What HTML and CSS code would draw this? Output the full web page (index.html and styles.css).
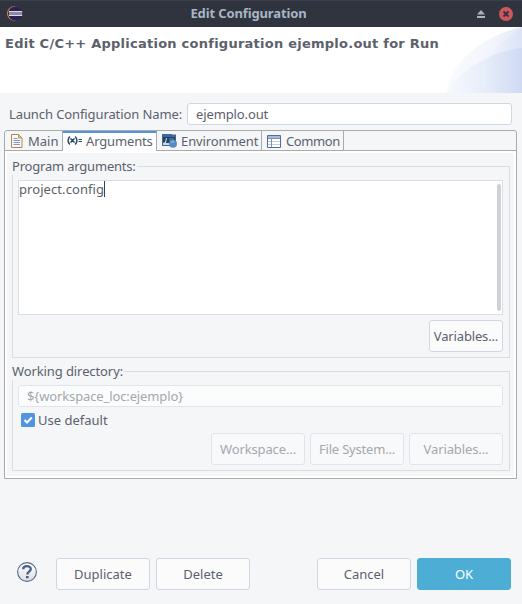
FILE: index.html
```
<!DOCTYPE html>
<html lang="en">
<head>
<meta charset="utf-8">
<title>Edit Configuration</title>
<link rel="stylesheet" href="styles.css">
</head>
<body>
<main class="dialog">
  <header class="titlebar">
    <svg class="app-icon" width="16" height="16" viewBox="0 0 16 16"><circle cx="7.2" cy="7.5" r="7.2" fill="#d88a35"/><circle cx="8.2" cy="7.5" r="7.1" fill="#2b2155"/><path d="M2 5.500h13.200M2 9.500h13.200" stroke="#dcd9e6"/><path d="M2 7.500h13.200" stroke="#8d88a8" stroke-width="3"/></svg>
    <h1 class="window-title">Edit Configuration</h1>
    <svg class="shade-icon" width="8" height="8" viewBox="0 0 8 8"><path d="M4 0 8 4.500H0zM0 6h8v2H0z" fill="#aeb2bd"/></svg>
    <svg class="close-icon" width="14" height="14" viewBox="0 0 14 14"><circle cx="7" cy="7" r="7" fill="#cc575d"/><path d="m4.500 4.500 5 5m0-5-5 5" stroke="#2f343f" stroke-width="1.800"/></svg>
  </header>
  <section class="banner">
    <h2 class="heading">Edit C/C++ Application configuration ejemplo.out for Run</h2>
    <svg class="swoosh" width="76" height="66" viewBox="0 0 76 66">
      <defs>
        <linearGradient id="pale"><stop offset="0" stop-color="#fafbfe"/><stop offset=".6" stop-color="#f2f5fc"/><stop offset="1" stop-color="#e2e8f7"/></linearGradient>
        <linearGradient id="mid"><stop offset="0" stop-color="#f4f7fd"/><stop offset="1" stop-color="#dbe3f5"/></linearGradient>
        <linearGradient id="deep"><stop offset="0" stop-color="#f7f9fe"/><stop offset=".5" stop-color="#e7edf9"/><stop offset="1" stop-color="#cfdaf3"/></linearGradient>
      </defs>
      <path d="M1 66C3 39 32 10 76 0v66z" fill="url(#pale)"/>
      <path d="M38 36C49 21 60 9 76 2v64H38z" fill="url(#mid)"/>
      <path d="M1 66C4 57 14 47 24 41 40 30 57 23 76 21v45z" fill="url(#deep)"/>
    </svg>
  </section>

  <div class="name-row">
    <label class="name-label">Launch Configuration Name:</label>
    <div class="field name-field"><span class="tight">ejemplo.out</span></div>
  </div>

  <section class="folder">
    <nav class="tabs">
      <div class="tab tab-main">
        <svg width="12" height="14" viewBox="0 0 12 14"><path d="M.5.5h7l3.500 3.500v9.500H.5z" fill="#f4f7fd" stroke="#b08d3c"/><path d="M7.500.5V4H11z" fill="#e8c671" stroke="#b08d3c" stroke-width=".8"/><path d="M2.500 4.500h4M2.500 6.500h6.500M2.500 8.500h6.500M2.500 10.500h6.500" stroke="#8297c5"/></svg>
        <span>Main</span>
      </div>
      <div class="tab tab-args">
        <svg width="16" height="10" viewBox="0 0 16 10"><path d="M2.800.5Q-.6 4.500 2.800 8.500M8.200.5Q11.600 4.500 8.200 8.500M3.500 2.500l4 4m0-4-4 4" fill="none" stroke="#28496f" stroke-width="1.500"/><path d="M11.500 3.500H15M11.500 5.500H15" stroke="#28496f"/></svg>
        <span>Arguments</span>
      </div>
      <div class="tab tab-env">
        <svg width="16" height="14" viewBox="0 0 16 14"><path d="M0 0h14v12H0z" fill="#406a9e"/><path d="M0 0h14v2H0z" fill="#356ba8"/><path d="M10 0h4v1h-4z" fill="#d0ad60"/><path d="M1 3h12v8H1z" fill="#234065"/><path d="M1 11V9l2-1 1-4h1L4 9h5v2z" fill="#c8d7e7"/><path d="M7 4h5v3H7z" fill="#456b98"/><circle cx="11" cy="9.800" r="4" fill="#568cc3"/><path d="M8 8q3-3 5 0l-2 1z" fill="#82b0da"/></svg>
        <span>Environment</span>
      </div>
      <div class="tab tab-common">
        <svg width="14" height="13" viewBox="0 0 14 13"><path d="M.5.5h13v12H.5z" fill="#fff" stroke="#566b99"/><path d="M1 1h12v2H1z" fill="#a9b9d9"/><path d="M1 3.500h12M4.500 3v9" stroke="#7f90b6"/><path d="M5 6.500h8M5 9.500h8M1 6.500h3M1 9.500h3" stroke="#c2ccdf"/></svg>
        <span>Common</span>
      </div>
    </nav>
    <div class="page">
      <fieldset class="group args-group">
        <legend class="legend-args">Program arguments:</legend>
        <div class="textarea"><span class="typed">project.config</span><i class="caret"></i><i class="scroll"></i></div>
        <div class="button variables">Variables...</div>
      </fieldset>
      <fieldset class="group dir-group">
        <legend class="legend-dir">Working directory:</legend>
        <div class="field dir-field"><span class="tight">${workspace_loc:ejemplo}</span></div>
        <div class="check-row">
          <svg width="14" height="14" viewBox="0 0 14 14"><rect width="14" height="14" rx="1.500" fill="#5294e2"/><path d="m3.500 7 2.500 2.500 4.800-5" fill="none" stroke="#fff" stroke-width="2"/></svg>
          <span>Use default</span>
        </div>
        <div class="dir-buttons">
          <div class="button disabled">Workspace...</div>
          <div class="button disabled"><span class="tighter">File System...</span></div>
          <div class="button disabled">Variables...</div>
        </div>
      </fieldset>
    </div>
  </section>

  <footer class="footer">
    <svg class="help" width="20" height="20" viewBox="0 0 20 20"><defs><linearGradient id="h" x2="0" y2="1"><stop offset="0" stop-color="#fff"/><stop offset="1" stop-color="#dedede"/></linearGradient></defs><circle cx="10" cy="10" r="9.400" fill="url(#h)" stroke="#566b8e" stroke-width="1.100"/><path d="M6.200 7.200C6.300 3.200 13.800 3.200 13.800 7c0 2.600-3.500 2.600-3.500 5.400" fill="none" stroke="#48608a" stroke-width="2.300"/><path d="M9 14h2.600v2.300H9z" fill="#48608a"/></svg>
    <div class="button">Duplicate</div>
    <div class="button">Delete</div>
    <div class="button cancel">Cancel</div>
    <div class="button ok">OK</div>
  </footer>
</main>
</body>
</html>
```
FILE: styles.css
```
* { box-sizing: border-box; }
body { margin: 0; background: #f4f6f8; }
svg { display: block; flex: none; }
.dialog {
  width: 522px; height: 604px; overflow: hidden;
  display: flex; flex-direction: column;
  font: 13px/18px "Noto Sans", "Open Sans", sans-serif;
  color: #5c616c; white-space: nowrap;
}
.titlebar {
  height: 27px; flex: none; padding: 0 9px 0 7px;
  display: flex; align-items: center;
  background: #2f343f; border-top: 1px solid #393f4d;
}
.window-title {
  margin: 0; flex: 1; padding-right: 3px; text-align: center;
  font-size: 13px; line-height: 16px; padding-bottom: 2px; font-weight: 700;
  letter-spacing: -.12px; color: #a9b4c4;
}
.shade-icon { margin-right: 14px; }
.banner {
  height: 66px; flex: none; background: #fff;
  display: flex; justify-content: space-between;
}
.heading {
  margin: 8px 0 0 5px; font: bold 13px/17px "DejaVu Sans", sans-serif;
  letter-spacing: .245px;
}
.swoosh { margin-left: -10px; }
.name-row { display: flex; align-items: center; margin: 10px 10px 0 9px; height: 22px; }
.name-label { width: 178px; flex: none; letter-spacing: -.1px; }
.field {
  height: 22px; display: flex; align-items: center; padding-left: 8px;
  border: 1px solid #cfd6e6; border-radius: 3px; background: #fff;
}
.name-field { flex: 1; }
.tight { letter-spacing: -.12px; }
.tighter { letter-spacing: -.2px; }
.folder {
  margin: 5px 5px 0 4px; height: 349px; flex: none;
  border: 1px solid #aaa; border-radius: 3px 3px 0 0;
}
.tabs { display: flex; height: 20px; border-bottom: 1px solid #aaa; }
.tab {
  display: flex; align-items: center; gap: 4px; height: 19px;
  border-right: 1px solid #aaa; padding-top: 1px;
}
.tab-main { width: 58px; padding-left: 6px; gap: 5px; }
.tab-args { width: 94px; height: 20px; padding: 0 0 2px 4px; gap: 3px; background: #fff; border-top: 2px solid #5294e2; letter-spacing: -.15px; }
.tab-env { width: 105px; padding-left: 5px; gap: 3px; letter-spacing: -.1px; }
.tab-common { width: 82px; padding-left: 5px; gap: 5px; letter-spacing: -.4px; }
.page {
  height: 327px; border: 2px solid #fff; padding: 4px 4px 0 5px;
}
.group { display: block; margin: 0; padding: 0 6px 0 5px; min-width: 0; border: 1px solid #dadde3; }
.group legend { padding: 0 1px 0 0; margin-left: -6px; height: 18px; line-height: 18px; }
.legend-args { letter-spacing: -.2px; }
.legend-dir { letter-spacing: -.1px; }
.args-group { height: 201px; }
.dir-group { height: 109px; margin-top: 4px; }
.textarea {
  position: relative; display: flex; height: 135px; margin-top: 5px;
  background: #fff; border: 1px solid #dadde3;
}
.typed { height: 18px; line-height: 16px; letter-spacing: .07px; }
.caret { width: 1px; height: 16px; background: #3c414c; }
.scroll { position: absolute; right: 1px; top: 3px; width: 4px; height: 127px; border-radius: 2px; background: #cfd1d5; }
.button {
  width: 94px; height: 32px; flex: none;
  display: flex; align-items: center; justify-content: center;
  background: #fbfbfc; border: 1px solid #cfd6e6; border-radius: 3px;
}
.variables { width: 74px; margin: 5px 0 0 auto; letter-spacing: -.15px; }
.dir-field { margin-top: 5px; background: #fbfcfc; border-color: #e0e4ed; color: #a5a8ad; }
.check-row { display: flex; align-items: center; gap: 3px; height: 26px; padding-left: 3px; }
.dir-buttons { display: flex; justify-content: flex-end; gap: 5px; letter-spacing: -.12px; }
.disabled { background: #f8f9fb; border-color: #e0e4ed; color: #a5a8ad; }
.footer { display: flex; align-items: center; gap: 6px; margin: 79px 11px 0 17px; height: 32px; }
.help { margin: 0 13px 4px 0; }
.cancel { margin-left: auto; }
.ok { background: #4dadd4; border-color: #4dadd4; color: #fff; }
```
